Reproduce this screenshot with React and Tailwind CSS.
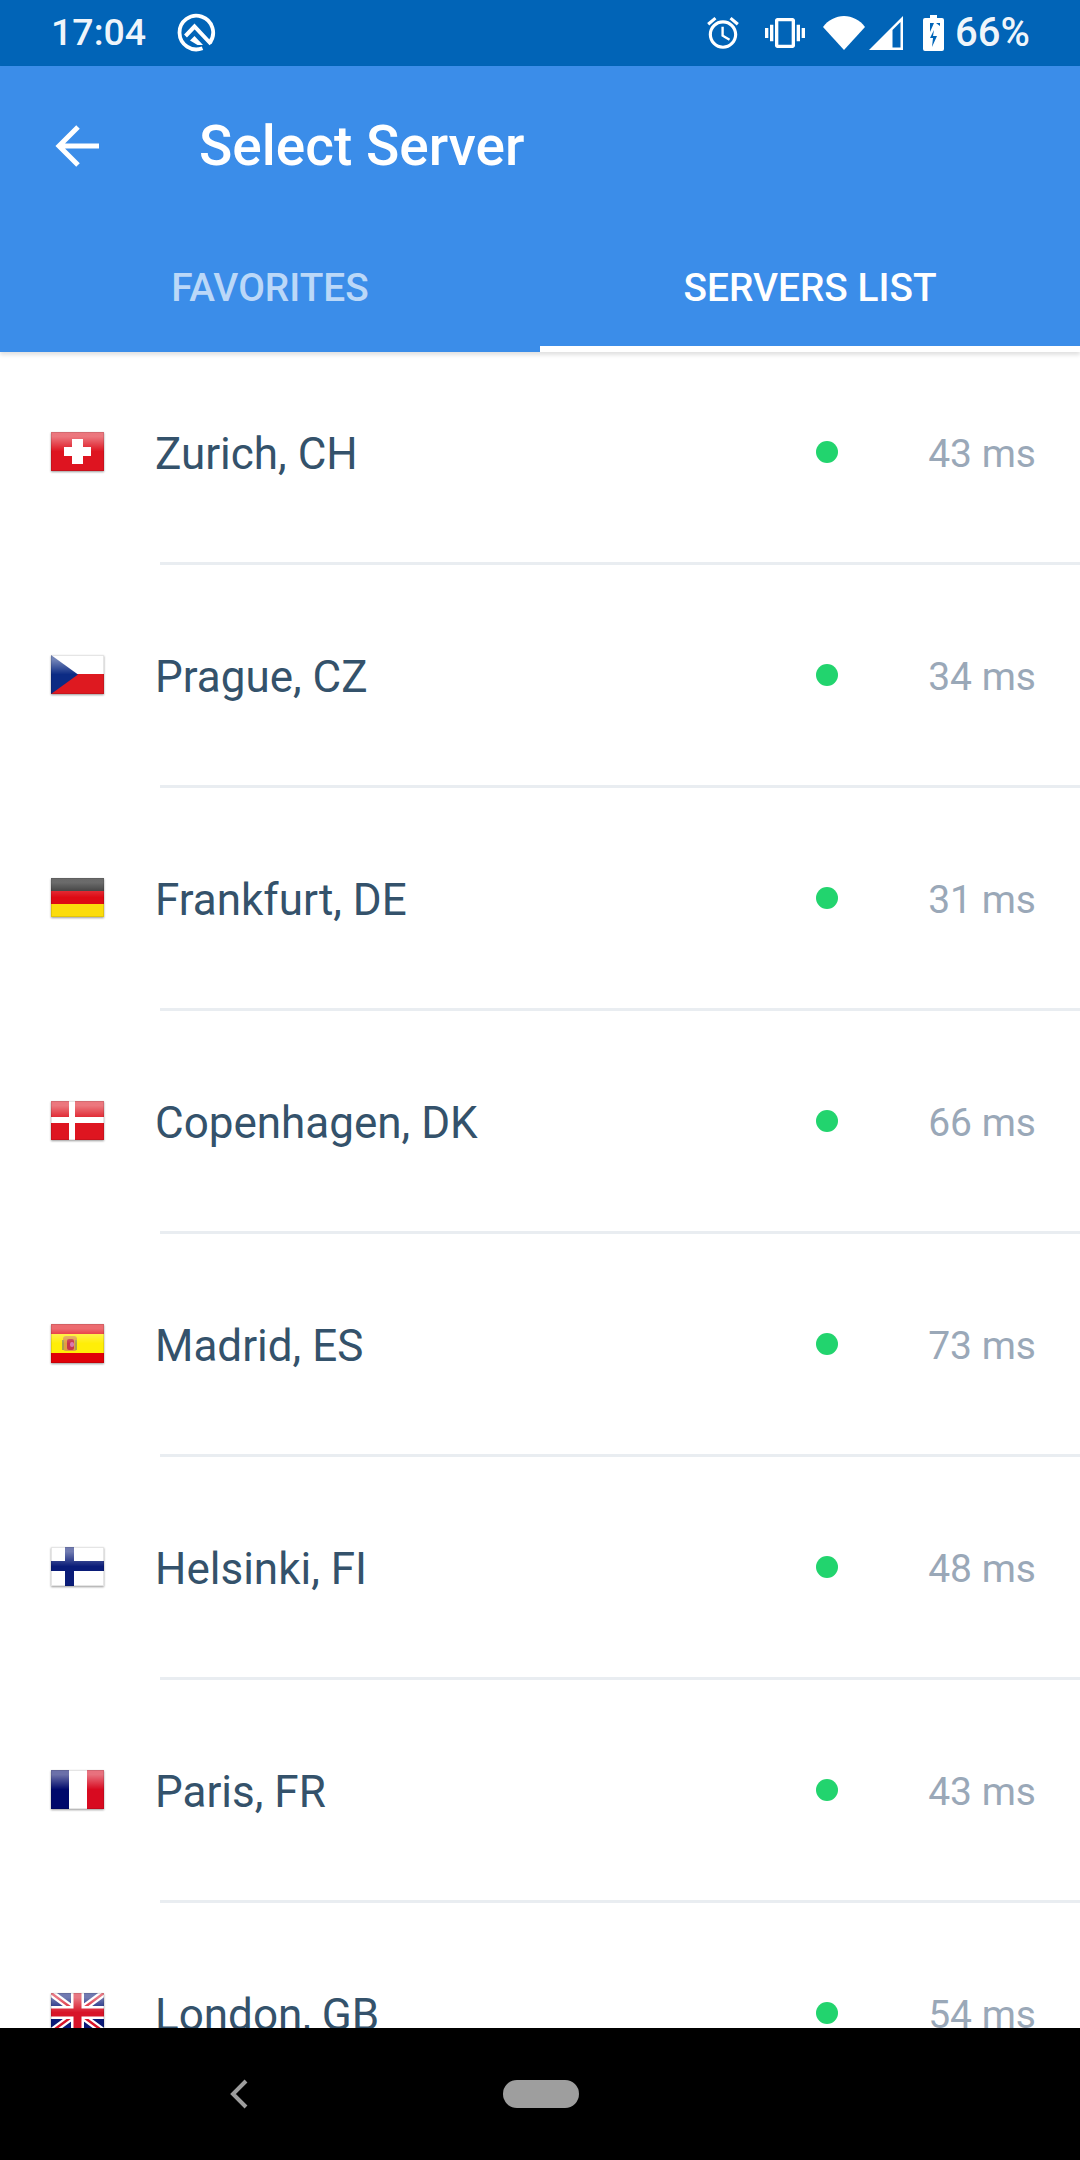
const rows = [
  ["ch", "Zurich, CH", "43 ms"],
  ["cz", "Prague, CZ", "34 ms"],
  ["de", "Frankfurt, DE", "31 ms"],
  ["dk", "Copenhagen, DK", "66 ms"],
  ["es", "Madrid, ES", "73 ms"],
  ["fi", "Helsinki, FI", "48 ms"],
  ["fr", "Paris, FR", "43 ms"],
  ["gb", "London, GB", "54 ms"],
];

function FlagBody({ code }) {
  switch (code) {
    case "ch":
      return (
        <>
          <rect width="53" height="39" fill="#DE1420" />
          <path d="M21 7h11v8h8v9h-8v8H21v-8h-8v-9h8z" fill="#fff" />
        </>
      );
    case "cz":
      return (
        <>
          <rect width="53" height="19" fill="#fff" />
          <rect y="19" width="53" height="20" fill="#DE1920" />
          <path d="M0 0L27 19.500L0 39z" fill="#0C2B84" />
        </>
      );
    case "de":
      return (
        <>
          <rect width="53" height="13" fill="#2b2b2b" />
          <rect y="13" width="53" height="13" fill="#DE0A14" />
          <rect y="26" width="53" height="13" fill="#FBDC0C" />
        </>
      );
    case "dk":
      return (
        <>
          <rect width="53" height="39" fill="#DE1520" />
          <rect x="18" width="6" height="39" fill="#fff" />
          <rect y="16" width="53" height="6" fill="#fff" />
        </>
      );
    case "es":
      return (
        <>
          <rect width="53" height="39" fill="#E00008" />
          <rect y="10" width="53" height="19" fill="#FFEE08" />
          <rect x="12" y="12" width="14" height="15" rx="3" fill="#E0A040" />
          <rect x="16" y="15" width="7" height="11" rx="2" fill="#C8354A" />
          <rect x="19" y="18" width="4" height="5" rx="2" fill="#D87AB0" />
          <rect x="11" y="16" width="2" height="10" fill="#A8A050" />
          <rect x="24" y="16" width="2" height="10" fill="#A8A050" />
        </>
      );
    case "fi":
      return (
        <>
          <rect width="53" height="39" fill="#fff" />
          <rect x="14" width="9" height="39" fill="#0A1C78" />
          <rect y="14" width="53" height="10" fill="#0A1C78" />
        </>
      );
    case "fr":
      return (
        <>
          <rect width="18" height="39" fill="#00096B" />
          <rect x="18" width="18" height="39" fill="#fff" />
          <rect x="36" width="17" height="39" fill="#D80A20" />
        </>
      );
    default:
      return (
        <>
          <rect width="53" height="39" fill="#0A1A78" />
          <path d="M0 0L53 39M53 0L0 39" stroke="#fff" strokeWidth="7" />
          <path d="M0 0L53 39M53 0L0 39" stroke="#D81428" strokeWidth="2.500" />
          <rect x="20" width="13" height="39" fill="#fff" />
          <rect y="13" width="53" height="13" fill="#fff" />
          <rect x="22.500" width="8" height="39" fill="#D81428" />
          <rect y="15.500" width="53" height="8" fill="#D81428" />
        </>
      );
  }
}

function Flag({ code }) {
  const gloss = code === "de" ? 0.3 : 0.42;
  return (
    <svg width="53" height="39" viewBox="0 0 53 39" className="shrink-0 mb-[2px] shadow-[0_1px_2px_rgba(0,0,0,0.4)]">
      <defs>
        <linearGradient id={"gl" + code} x1="0" y1="0" x2="0" y2="1">
          <stop offset="0" stopColor="#fff" stopOpacity={gloss} />
          <stop offset="0.12" stopColor="#fff" stopOpacity={gloss} />
          <stop offset="0.5" stopColor="#fff" stopOpacity="0" />
        </linearGradient>
      </defs>
      <FlagBody code={code} />
      <rect width="53" height="39" fill={"url(#gl" + code + ")"} />
      <rect x="0.500" y="0.500" width="52" height="38" fill="none" stroke="#000" strokeOpacity="0.1" />
    </svg>
  );
}

function Row({ code, name, ping }) {
  return (
    <div className="shrink-0">
      <div className="h-[220px] flex items-center pl-[51px] pr-[44px]">
        <Flag code={code} />
        <span className="ml-[51px] flex-1 text-[44px] text-[#34526B] leading-none pt-[4px]">{name}</span>
        <span className="w-[22px] h-[22px] rounded-full bg-[#22D46E]" />
        <span className="w-[198px] shrink-0 text-right text-[39px] text-[#9AA8B8] leading-none pt-[4px]">{ping}</span>
      </div>
      <div className="ml-[160px] h-[3px] bg-[#E9EDF1]" />
    </div>
  );
}

function QLogo() {
  return (
    <svg width="40" height="40" viewBox="0 0 40 40" className="shrink-0" fill="none">
      <path d="M26.500 35.200A16.800 16.800 0 1 1 33.500 30" stroke="#fff" strokeWidth="3.800" />
      <path d="M9.500 23L18.500 13.500L35 31" stroke="#fff" strokeWidth="4" />
      <path d="M14 27.500l4.500-4.500 8.500 9-5.500 0z" fill="#fff" />
    </svg>
  );
}

export default function App() {
  return (
    <div className="w-[1080px] h-[2160px] flex flex-col bg-white overflow-hidden font-['Roboto',sans-serif]">
      <div className="h-[66px] shrink-0 bg-[#0164B7] flex items-center text-white">
        <span className="ml-[51px] text-[37.500px] font-medium leading-none text-white/95">17:04</span>
        <span className="ml-[30px]"><QLogo /></span>
        <div className="ml-auto mr-[50px] flex items-center">
          <svg width="38" height="38" viewBox="0 0 24 24" fill="#fff">
            <path d="M22 5.720l-4.600-3.860-1.290 1.530 4.600 3.860L22 5.720zM7.880 3.390L6.600 1.860 2 5.710l1.290 1.530 4.590-3.850zM12.500 8H11v6l4.750 2.850.750-1.230-4-2.370V8zM12 4c-4.970 0-9 4.030-9 9s4.020 9 9 9c4.970 0 9-4.030 9-9s-4.030-9-9-9zm0 16c-3.870 0-7-3.130-7-7s3.130-7 7-7 7 3.130 7 7-3.130 7-7 7z" />
          </svg>
          <svg width="40" height="40" viewBox="0 0 24 24" fill="#fff" className="ml-[23px]">
            <path d="M0 15h2V9H0v6zm3 2h2V7H3v10zm19-8v6h2V9h-2zm-3 8h2V7h-2v10zM16.500 3h-9C6.670 3 6 3.670 6 4.500v15c0 .830.670 1.500 1.500 1.500h9c.830 0 1.500-.670 1.500-1.500v-15c0-.830-.670-1.500-1.500-1.500zM16 19H8V5h8v14z" />
          </svg>
          <svg width="42" height="34" viewBox="0 0 42 34" fill="#fff" className="ml-[18px]">
            <path d="M0 11C5 4 13 0 21 0s16 4 21 11L21 34z" />
          </svg>
          <svg width="34" height="34" viewBox="0 0 34 34" className="ml-[4px]" fill="#fff">
            <path fillRule="evenodd" d="M34 0v34H0zM31.500 6L23.500 14v17.500h8z" />
          </svg>
          <svg width="21" height="36" viewBox="0 0 21 36" className="ml-[20px]">
            <path fill="#fff" d="M7 0h7v3h5a2 2 0 0 1 2 2v29a2 2 0 0 1-2 2H2a2 2 0 0 1-2-2V5a2 2 0 0 1 2-2h5z" />
            <path fill="#0164B7" d="M4 8h7l-4 9V8zM13 8h4v3zM11 15l-1 6h4l-5 11 1-9H7z" />
          </svg>
          <span className="ml-[11px] w-[75px] text-[40px] font-medium leading-none text-white/95">66%</span>
        </div>
      </div>

      <div className="relative z-10 shrink-0 h-[286px] bg-[#3B8DE9] shadow-[0_3px_4px_rgba(0,0,0,0.12)] flex flex-col">
        <div className="h-[156px] flex items-center pl-[54px] pt-[4px]">
          <svg width="46" height="46" viewBox="0 0 46 46" fill="none" stroke="#fff" strokeWidth="5">
            <path d="M45 23H5M24 4L5 23l19 19" />
          </svg>
          <span className="ml-[99px] text-[55px] font-medium text-white leading-none">Select Server</span>
        </div>
        <div className="flex-1 flex">
          <div className="flex-1 flex items-center justify-center pt-[2px] text-[38.800px] font-medium text-[#BBD8F8]">FAVORITES</div>
          <div className="flex-1 flex items-center justify-center pt-[8px] text-[38.800px] font-medium text-white border-b-[6px] border-white">SERVERS LIST</div>
        </div>
      </div>

      <div className="flex-1 min-h-0 overflow-hidden -mt-[10px] flex flex-col">
        {rows.map(([code, name, ping]) => (
          <Row key={code} code={code} name={name} ping={ping} />
        ))}
      </div>

      <div className="relative z-10 shrink-0 h-[132px] bg-black flex items-center">
        <svg width="20" height="30" viewBox="0 0 20 30" fill="none" stroke="#9E9E9E" strokeWidth="4" className="ml-[229px]">
          <path d="M17 2L4 15l13 13" />
        </svg>
        <div className="ml-[254px] w-[76px] h-[28px] rounded-full bg-[#9E9E9E]" />
      </div>
    </div>
  );
}
